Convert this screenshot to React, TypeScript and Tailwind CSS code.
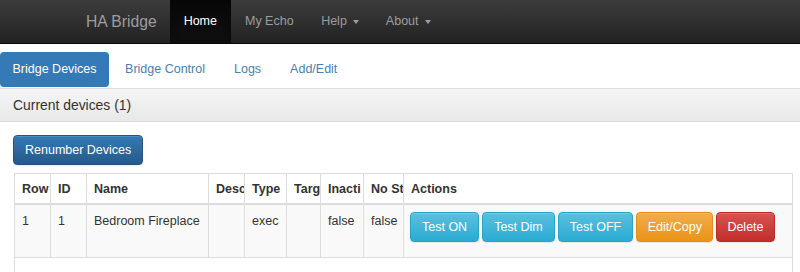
import React from 'react'

const cols = [
  { label: 'Row', w: 'w-[36px]', cell: '1' },
  { label: 'ID', w: 'w-[36px]', cell: '1' },
  { label: 'Name', w: 'w-[122px]', cell: 'Bedroom Fireplace' },
  { label: 'Desc', w: 'w-[36px]', cell: '' },
  { label: 'Type', w: 'w-[42px]', cell: 'exec' },
  { label: 'Targ', w: 'w-[34px]', cell: '' },
  { label: 'Inacti', w: 'w-[43px]', cell: 'false' },
  { label: 'No St', w: 'w-[40px]', cell: 'false' },
]

const actions = [
  { label: 'Test ON', cls: 'px-[11px] bg-[linear-gradient(to_bottom,#5bc0de,#2aabd2)] border-[#28a4c9]' },
  { label: 'Test Dim', cls: 'px-[11px] bg-[linear-gradient(to_bottom,#5bc0de,#2aabd2)] border-[#28a4c9]' },
  { label: 'Test OFF', cls: 'px-[11px] bg-[linear-gradient(to_bottom,#5bc0de,#2aabd2)] border-[#28a4c9]' },
  { label: 'Edit/Copy', cls: 'px-[10.5px] bg-[linear-gradient(to_bottom,#f0ad4e,#eb9316)] border-[#e38d13]' },
  { label: 'Delete', cls: 'px-[10px] bg-[linear-gradient(to_bottom,#d9534f,#c12e2a)] border-[#b92c28]' },
]

function Caret() {
  return <span className="inline-block ml-[6px] align-middle w-0 h-0 border-t-[4px] border-t-current border-x-[3.5px] border-x-transparent" />
}

export default function App() {
  return (
    <div className="w-[800px] h-[272px] overflow-hidden bg-white text-[#333] font-['Liberation_Sans',Arial,sans-serif]">
      {/* navbar */}
      <nav className="h-[44px] flex pl-[73px] bg-[linear-gradient(to_bottom,#3c3c3c,#222)] border-b border-[#080808] text-[12.5px] text-[#9d9d9d]">
        <span className="px-[13px] leading-[43px] text-[15.7px]">HA Bridge</span>
        <span className="px-[14px] leading-[43px] text-white bg-[linear-gradient(to_bottom,#080808,#0f0f0f)] shadow-[inset_0_3px_9px_rgba(0,0,0,0.25)]">Home</span>
        <span className="px-[14px] leading-[43px]">My Echo</span>
        <span className="px-[13.5px] leading-[43px]">Help<Caret /></span>
        <span className="px-[13.5px] leading-[43px]">About<Caret /></span>
      </nav>

      {/* tabs */}
      <div className="flex mt-[8px] text-[12.5px] leading-[17px]">
        <span className="px-[12.5px] py-[9px] rounded-[4px] bg-[#337ab7] text-white">Bridge Devices</span>
        <span className="ml-[3px] px-[13px] py-[9px] text-[#4a7fae]">Bridge Control</span>
        <span className="ml-[3px] px-[13px] py-[9px] text-[#4a7fae]">Logs</span>
        <span className="ml-[3px] px-[13px] py-[9px] text-[#4a7fae]">Add/Edit</span>
      </div>

      {/* panel */}
      <div className="mt-px border-t border-[#ddd]">
        <div className="h-[33px] px-[13px] flex items-center bg-[linear-gradient(to_bottom,#f5f5f5,#e8e8e8)] border-b border-[#ddd] text-[13.9px]">
          Current devices (1)
        </div>
        <div className="pt-[13px] pl-[13px] pr-[7px]">
          <button className="h-[30px] px-[11px] rounded-[4px] border border-[#245580] bg-[linear-gradient(to_bottom,#337ab7,#265a88)] text-white text-[12.5px] shadow-[inset_0_1px_0_rgba(255,255,255,0.15),0_1px_1px_rgba(0,0,0,0.075)]">
            Renumber Devices
          </button>

          <div className="mt-[8px] ml-px border border-[#ddd] text-[12.5px]">
            <div className="flex h-[31px] border-b-2 border-[#ddd] font-bold">
              {cols.map((c) => (
                <div key={c.label} className={`${c.w} shrink-0 border-r border-[#ddd] px-[7px] leading-[30px] whitespace-nowrap overflow-hidden`}>
                  {c.label}
                </div>
              ))}
              <div className="flex-1 px-[7px] leading-[30px]">Actions</div>
            </div>
            <div className="flex h-[53px] bg-[#f9f9f9] border-b border-[#ddd]">
              {cols.map((c) => (
                <div key={c.label} className={`${c.w} shrink-0 border-r border-[#ddd] px-[7px] pt-[8px] leading-[17px] whitespace-nowrap overflow-hidden`}>
                  {c.cell}
                </div>
              ))}
              <div className="flex-1 pl-[6px] pt-[7px] flex gap-[3px] items-start">
                {actions.map((a) => (
                  <button key={a.label} className={`h-[30px] rounded-[4px] border text-white text-[12.5px] whitespace-nowrap shadow-[inset_0_1px_0_rgba(255,255,255,0.15),0_1px_1px_rgba(0,0,0,0.075)] ${a.cls}`}>
                    {a.label}
                  </button>
                ))}
              </div>
            </div>
            <div className="h-[20px] bg-white" />
          </div>
        </div>
      </div>
    </div>
  )
}
